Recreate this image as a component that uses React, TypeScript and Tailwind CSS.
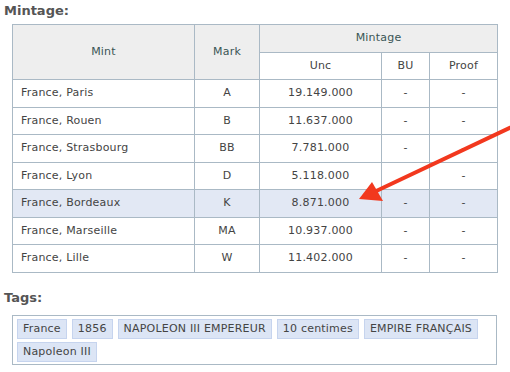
import React from "react";

const rows = [
	{ mint: "France, Paris", mark: "A", unc: "19.149.000" },
	{ mint: "France, Rouen", mark: "B", unc: "11.637.000" },
	{ mint: "France, Strasbourg", mark: "BB", unc: "7.781.000" },
	{ mint: "France, Lyon", mark: "D", unc: "5.118.000" },
	{ mint: "France, Bordeaux", mark: "K", unc: "8.871.000", hl: true },
	{ mint: "France, Marseille", mark: "MA", unc: "10.937.000" },
	{ mint: "France, Lille", mark: "W", unc: "11.402.000" },
];

const tags = ["France", "1856", "NAPOLEON III EMPEREUR", "10 centimes", "EMPIRE FRANÇAIS", "Napoleon III"];

const cell = "border border-[#aab9c5] h-[27.5px] p-0 font-normal";

export default function App() {
	return (
		<div className="relative w-[510px] h-[372px] bg-white overflow-hidden text-[11px] tracking-[0.2px] text-[#444] font-['DejaVu_Sans',Verdana,sans-serif]">
			<h3 className="pl-[4px] pt-[2px] h-[24px] text-[13px] tracking-normal font-bold text-[#555] leading-[18px]">Mintage:</h3>

			<table className="ml-[12px] w-[485px] border-collapse table-fixed">
				<colgroup>
					<col className="w-[182px]" />
					<col className="w-[65px]" />
					<col className="w-[122px]" />
					<col className="w-[48px]" />
					<col className="w-[68px]" />
				</colgroup>
				<thead className="bg-[#eeeeee] text-[#3a5555]">
					<tr>
						<th rowSpan={2} className={cell}>Mint</th>
						<th rowSpan={2} className={cell}>Mark</th>
						<th colSpan={3} className={cell}>Mintage</th>
					</tr>
					<tr>
						<th className={`${cell} bg-white text-[#444]`}>Unc</th>
						<th className={`${cell} bg-white text-[#444]`}>BU</th>
						<th className={`${cell} bg-white text-[#444]`}>Proof</th>
					</tr>
				</thead>
				<tbody>
					{rows.map((r) => (
						<tr key={r.mint} className={r.hl ? "bg-[#e2e8f4]" : ""}>
							<td className={`${cell} pl-[8px] text-left`}>{r.mint}</td>
							<td className={`${cell} text-center`}>{r.mark}</td>
							<td className={`${cell} text-center`}>{r.unc}</td>
							<td className={`${cell} text-center`}>-</td>
							<td className={`${cell} text-center`}>-</td>
						</tr>
					))}
				</tbody>
			</table>

			<h3 className="pl-[4px] pt-[16px] h-[42px] text-[13px] tracking-normal font-bold text-[#555] leading-[18px]">Tags:</h3>
			<div className="ml-[12px] w-[485px] h-[50px] border border-[#aab9c5] px-[4px] pt-[3px] flex flex-wrap content-start gap-x-[5px] gap-y-[3px]">
				{tags.map((t) => (
					<span key={t} className="h-[20px] px-[5px] bg-[#dce5f5] border border-[#c6d4ee] leading-[18px]">
						{t}
					</span>
				))}
			</div>

			{/* annotation arrow */}
			<svg className="absolute left-0 top-0 pointer-events-none" width="510" height="372">
				<line x1="522" y1="122" x2="372" y2="193" stroke="#f2381e" strokeWidth="4" strokeLinecap="round" />
				<polygon points="359,199 372,182 383,201" fill="#f2381e" />
			</svg>
		</div>
	);
}
